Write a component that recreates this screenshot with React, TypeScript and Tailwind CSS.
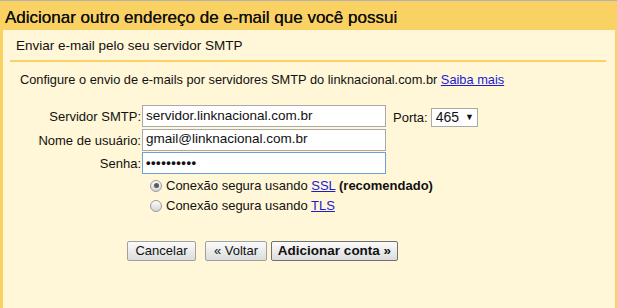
import React from "react";

function Radio({ checked }: { checked?: boolean }) {
  return (
    <span className="w-[12px] h-[12px] rounded-full border border-[#9a9a9a] bg-gradient-to-b from-[#fafafa] to-[#d6d6d6] flex items-center justify-center shrink-0">
      {checked && <span className="w-[5px] h-[5px] rounded-full bg-[#5a5a5a]" />}
    </span>
  );
}

function Field({ label, value, focused, password }: { label: string; value: string; focused?: boolean; password?: boolean }) {
  return (
    <div className="flex items-start">
      <div className="w-[139px] text-right pt-[2px] pr-[1px]">{label}</div>
      <div
        className={
          focused
            ? "w-[244px] h-[22px] bg-white border border-[#6e9fdb] px-[3px] flex items-center text-[13.5px]"
            : "w-[244px] h-[22px] bg-white border border-[#a9a9a9] px-[3px] flex items-center text-[13.5px]"
        }
      >
        {password ? <span className="font-bold text-[13px] tracking-[0.5px]">{value}</span> : value}
      </div>
    </div>
  );
}

export default function App() {
  return (
    <div className="w-[617px] h-[308px] overflow-hidden border-t border-[#b3b3b3] bg-[#fad163] text-[#111] font-['Liberation_Sans',Arial,sans-serif] text-[13px] flex flex-col">
      <div className="h-[29px] pl-[5px] pt-[7px] text-[17px] leading-[20px] [text-shadow:0_0_0.4px_#111]">
        Adicionar outro endereço de e-mail que você possui
      </div>
      <div className="flex-1 ml-[3px] mr-[2px] bg-[#fff7d7] flex flex-col">
        <div className="mx-[7px] mr-[9px] h-[32px] border-b-2 border-[#fad163] pl-[6px] pt-[8px] text-[13.5px] leading-[16px]">
          Enviar e-mail pelo seu servidor SMTP
        </div>
        <div className="pl-[17px] pt-[10px] leading-[16px] text-[12.8px]">
          Configure o envio de e-mails por servidores SMTP do linknacional.com.br{" "}
          <span className="text-[#1a1ad8] underline">Saiba mais</span>
        </div>
        <div className="mt-[17px] flex flex-col gap-[1px]">
          <div className="flex items-start">
            <Field label="Servidor SMTP:" value="servidor.linknacional.com.br" />
            <div className="ml-[7px] mt-[2px] flex items-center">
              <span className="pt-[1px]">Porta:</span>
              <div className="ml-[3px] w-[47px] h-[19px] bg-white border border-[#a9a9a9] flex items-center pl-[4px] text-[14px]">
                465
                <span className="ml-[6px] text-[9px]">▼</span>
              </div>
            </div>
          </div>
          <Field label="Nome de usuário:" value="gmail@linknacional.com.br" />
          <Field label="Senha:" value="••••••••••" focused password />
        </div>
        <div className="mt-[4px] ml-[147px] flex flex-col gap-[4px] text-[13px] leading-[16px]">
          <div className="flex items-center gap-[4px]">
            <Radio checked />
            <span>
              Conexão segura usando <span className="text-[#1a1ad8] underline">SSL</span>{" "}
              <span className="font-bold">(recomendado)</span>
            </span>
          </div>
          <div className="flex items-center gap-[4px]">
            <Radio />
            <span>
              Conexão segura usando <span className="text-[#1a1ad8] underline">TLS</span>
            </span>
          </div>
        </div>
        <div className="mt-[27px] ml-[124px] flex items-center text-[13px]">
          <button className="h-[20px] w-[69px] border border-[#a0a0a0] rounded-[2px] bg-gradient-to-b from-[#fbfbfb] to-[#dcdcdc] leading-[18px]">
            Cancelar
          </button>
          <button className="ml-[9px] h-[20px] w-[62px] border border-[#a0a0a0] rounded-[2px] bg-gradient-to-b from-[#fbfbfb] to-[#dcdcdc] leading-[18px]">
            « Voltar
          </button>
          <button className="ml-[4px] h-[20px] w-[127px] border border-[#707070] rounded-[2px] bg-gradient-to-b from-[#fbfbfb] to-[#dcdcdc] font-bold leading-[18px] text-[13.5px]">
            Adicionar conta »
          </button>
        </div>
      </div>
    </div>
  );
}
